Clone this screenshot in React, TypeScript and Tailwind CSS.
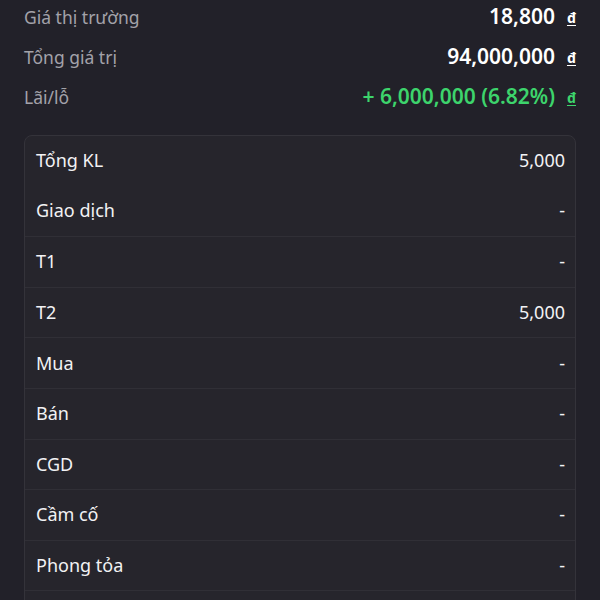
import React from "react";

const summary = [
  { label: "Giá thị trường", value: "18,800", green: false },
  { label: "Tổng giá trị", value: "94,000,000", green: false },
  { label: "Lãi/lỗ", value: "+ 6,000,000 (6.82%)", green: true },
];

const rows = [
  { label: "Tổng KL", value: "5,000", sep: false },
  { label: "Giao dịch", value: "-", sep: false },
  { label: "T1", value: "-", sep: true },
  { label: "T2", value: "5,000", sep: true },
  { label: "Mua", value: "-", sep: true },
  { label: "Bán", value: "-", sep: true },
  { label: "CGD", value: "-", sep: true },
  { label: "Cầm cố", value: "-", sep: true },
  { label: "Phong tỏa", value: "-", sep: true },
  { label: "", value: "", sep: true },
];

export default function App() {
  return (
    <div
      className="w-[600px] h-[600px] overflow-hidden bg-[#222129] text-white"
      style={{ fontFamily: '"Noto Sans", "Open Sans", sans-serif' }}
    >
      <div className="flex flex-col -mt-[3px] px-6">
        {summary.map((s) => (
          <div key={s.label} className="flex h-10 items-center justify-between">
            <span className="text-[17.5px] text-[#a3a2a9]">{s.label}</span>
            <span className="flex items-center gap-[12px]">
              <span
                className={`text-[21px] font-semibold ${s.green ? "text-[#3dd46c]" : "text-white"}`}
              >
                {s.value}
              </span>
              <span
                className={`text-[14px] font-bold underline underline-offset-2 ${s.green ? "text-[#3dd46c]" : "text-white"}`}
              >
                đ
              </span>
            </span>
          </div>
        ))}
      </div>
      <div className="mx-6 mt-[18px] rounded-lg border border-[#34333a] bg-[#26252c]">
        {rows.map((r, i) => (
          <div
            key={i}
            className={`flex h-[50.6px] items-center justify-between pl-[11px] pr-[10px] ${i === 0 ? "-mt-px" : ""} ${r.sep ? "border-t border-[#302f36]" : ""}`}
          >
            <span className="text-[18px] text-[#f2f2f4]">{r.label}</span>
            <span className="text-[18px] text-[#f2f2f4]">{r.value}</span>
          </div>
        ))}
      </div>
    </div>
  );
}
